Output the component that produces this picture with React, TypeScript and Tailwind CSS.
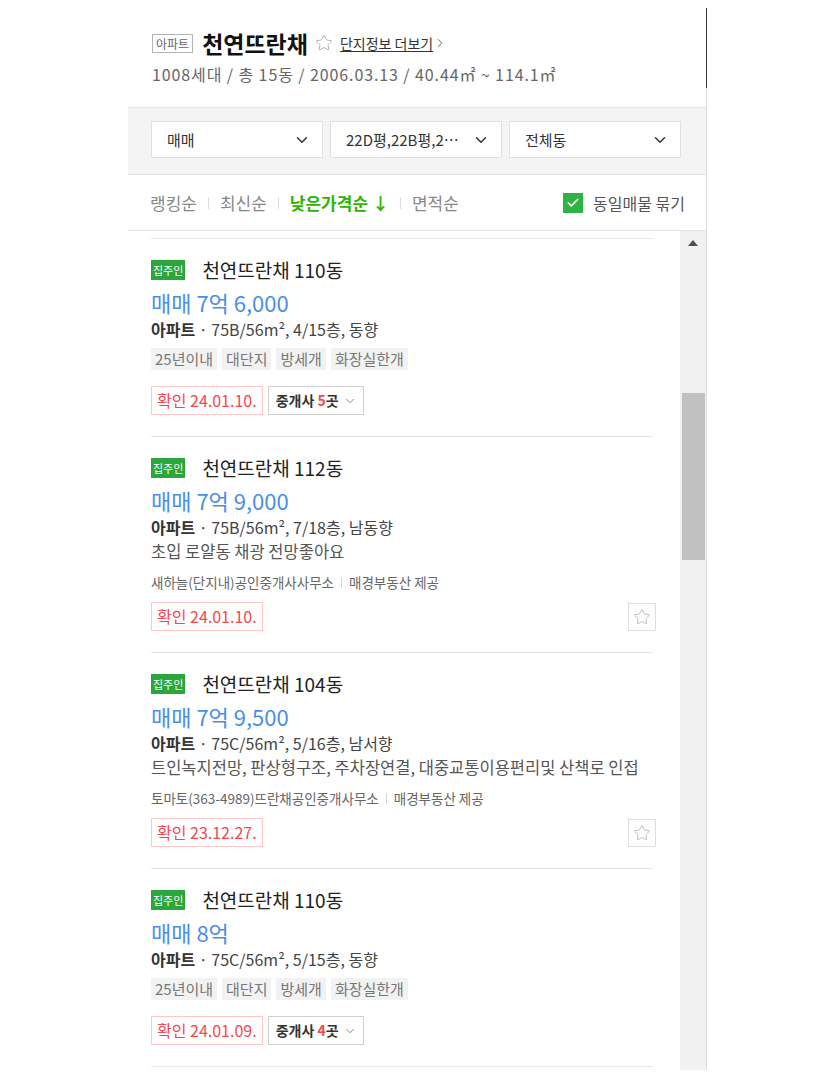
import { ChevronDown, ChevronRight, Star, Check } from "lucide-react";

type Listing = {
  dong: string;
  price: string;
  spec: string;
  tags?: string[];
  desc?: string;
  agency?: string;
  confirm: string;
  brokers?: number;
};

const listings: Listing[] = [
  {
    dong: "천연뜨란채 110동",
    price: "매매 7억 6,000",
    spec: "75B/56m², 4/15층, 동향",
    tags: ["25년이내", "대단지", "방세개", "화장실한개"],
    confirm: "24.01.10.",
    brokers: 5,
  },
  {
    dong: "천연뜨란채 112동",
    price: "매매 7억 9,000",
    spec: "75B/56m², 7/18층, 남동향",
    desc: "초입 로얄동 채광 전망좋아요",
    agency: "새하늘(단지내)공인중개사사무소",
    confirm: "24.01.10.",
  },
  {
    dong: "천연뜨란채 104동",
    price: "매매 7억 9,500",
    spec: "75C/56m², 5/16층, 남서향",
    desc: "트인녹지전망, 판상형구조, 주차장연결, 대중교통이용편리및 산책로 인접",
    agency: "토마토(363-4989)뜨란채공인중개사무소",
    confirm: "23.12.27.",
  },
  {
    dong: "천연뜨란채 110동",
    price: "매매 8억",
    spec: "75C/56m², 5/15층, 동향",
    tags: ["25년이내", "대단지", "방세개", "화장실한개"],
    confirm: "24.01.09.",
    brokers: 4,
  },
];

function SelectBox({ label }: { label: string }) {
  return (
    <div className="flex-1 h-[37px] bg-white border border-[#e1e1e1] flex items-center justify-between pl-[15px] pr-[11px]">
      <span className="text-[15px] text-[#333] leading-[20px]">{label}</span>
      <ChevronDown size={18} strokeWidth={2} className="text-[#333]" />
    </div>
  );
}

function Divider() {
  return <span className="w-px h-[12px] bg-[#dddddd] mx-[11px]" />;
}

function ListingItem({ item }: { item: Listing }) {
  return (
    <div className="border-t border-[#e8e8e8] pt-[21px] pb-[21px]">
      <div className="flex items-center h-[20px]">
        <span className="h-[20px] px-[2px] bg-[#2aa63c] text-white text-[11px] leading-[20px]">집주인</span>
        <span className="ml-[17px] text-[19px] text-[#222] leading-[20px]">{item.dong}</span>
      </div>
      <div className="mt-[9px] text-[22px] leading-[26px] text-[#4a8fe6]">{item.price}</div>
      <div className="mt-[4px] text-[16px] leading-[20px] text-[#444]">
        <span className="font-bold text-[#333]">아파트</span> · {item.spec}
      </div>
      {item.desc && <div className="mt-[4px] text-[16.5px] leading-[20px] text-[#555]">{item.desc}</div>}
      {item.tags && (
        <div className="mt-[9px] flex gap-[5px]">
          {item.tags.map((t) => (
            <span key={t} className="h-[22px] px-[4px] bg-[#f2f2f2] text-[15px] leading-[22px] text-[#777]">
              {t}
            </span>
          ))}
        </div>
      )}
      {item.agency && (
        <div className="mt-[12px] flex items-center text-[13.5px] leading-[18px] text-[#666]">
          {item.agency}
          <span className="w-px h-[11px] bg-[#d5d5d5] mx-[7px]" />
          매경부동산 제공
        </div>
      )}
      <div className={`${item.tags ? "mt-[16px]" : "mt-[11px]"} flex items-center gap-[5px]`}>
        <span className="h-[29px] px-[5px] border border-[#ffc6c6] text-[16px] leading-[27px] text-[#f2494e]">
          확인 {item.confirm}
        </span>
        {item.brokers ? (
          <span className="h-[29px] pl-[7px] pr-[6px] border border-[#cfcfcf] flex items-center gap-[4px] text-[14px] text-[#333]">
            <span className="font-bold">
              중개사 <span className="text-[#f2494e]">{item.brokers}</span>곳
            </span>
            <ChevronDown size={14} strokeWidth={1.5} className="text-[#777]" />
          </span>
        ) : (
          <span className="ml-auto -mr-[3px] w-[28px] h-[28px] border border-[#dddddd] flex items-center justify-center">
            <Star size={18} strokeWidth={1.2} className="text-[#b5b5b5]" />
          </span>
        )}
      </div>
    </div>
  );
}

export default function App() {
  return (
    <div className="min-h-screen bg-white flex font-['Noto_Sans_CJK_KR',sans-serif]">
      <div className="w-[128px] shrink-0" />
      <div className="w-[578px] h-[1070px] flex flex-col">
        {/* 단지 정보 */}
        <div className="h-[108px] pt-[33px] pl-[24px] border-b border-[#e6e6e6] shrink-0">
          <div className="flex items-center h-[20px]">
            <span className="h-[19px] px-[3px] border border-[#b5b5b5] text-[12px] leading-[17px] text-[#666]">아파트</span>
            <span className="ml-[9px] text-[23px] font-bold leading-[22px] text-[#111]">천연뜨란채</span>
            <Star size={18} strokeWidth={1.2} className="ml-[7px] text-[#aaa]" />
            <span className="ml-[7px] flex items-center text-[14px] text-[#333] underline underline-offset-2">
              단지정보 더보기
              <ChevronRight size={14} strokeWidth={1.5} className="text-[#555]" />
            </span>
          </div>
          <div className="mt-[11px] text-[16px] tracking-[0.9px] leading-[20px] text-[#666]">
            1008세대 / 총 15동 / 2006.03.13 / 40.44㎡ ~ 114.1㎡
          </div>
        </div>

        {/* 필터 */}
        <div className="h-[67px] bg-[#f4f4f4] border-b border-[#e3e3e3] pt-[13px] pl-[23px] pr-[25px] flex gap-[7px] shrink-0">
          <SelectBox label="매매" />
          <SelectBox label="22D평,22B평,2…" />
          <SelectBox label="전체동" />
        </div>

        {/* 정렬 */}
        <div className="h-[56px] border-b border-[#e5e5e5] flex items-center justify-between pl-[22px] pr-[21px] shrink-0">
          <div className="flex items-center text-[17px] text-[#888]">
            <span>랭킹순</span>
            <Divider />
            <span>최신순</span>
            <Divider />
            <span className="font-bold text-[#2db400]">낮은가격순 ↓</span>
            <Divider />
            <span>면적순</span>
          </div>
          <div className="flex items-center">
            <span className="w-[20px] h-[20px] bg-[#2db443] flex items-center justify-center">
              <Check size={14} strokeWidth={3} className="text-white" />
            </span>
            <span className="ml-[10px] text-[16px] text-[#555]">동일매물 묶기</span>
          </div>
        </div>

        {/* 매물 목록 */}
        <div className="flex-1 flex overflow-hidden">
          <div className="flex-1 pl-[23px] pr-[27px]">
            <div className="h-[7px]" />
            {listings.map((it, i) => (
              <ListingItem key={i} item={it} />
            ))}
            <div className="border-t border-[#e8e8e8]" />
          </div>
          <div className="w-[26px] bg-[#f1f1f1] flex flex-col items-center shrink-0">
            <div className="mt-[9px] w-0 h-0 border-l-[5px] border-r-[5px] border-b-[6px] border-l-transparent border-r-transparent border-b-[#505050]" />
            <div className="mt-[147px] w-[23px] h-[167px] bg-[#c1c1c1]" />
          </div>
        </div>
      </div>
      <div className="w-px h-[1070px] flex flex-col shrink-0">
        <div className="h-[8px]" />
        <div className="h-[80px] bg-[#3a3a3a]" />
        <div className="flex-1 bg-[#dcdcdc]" />
      </div>
    </div>
  );
}
